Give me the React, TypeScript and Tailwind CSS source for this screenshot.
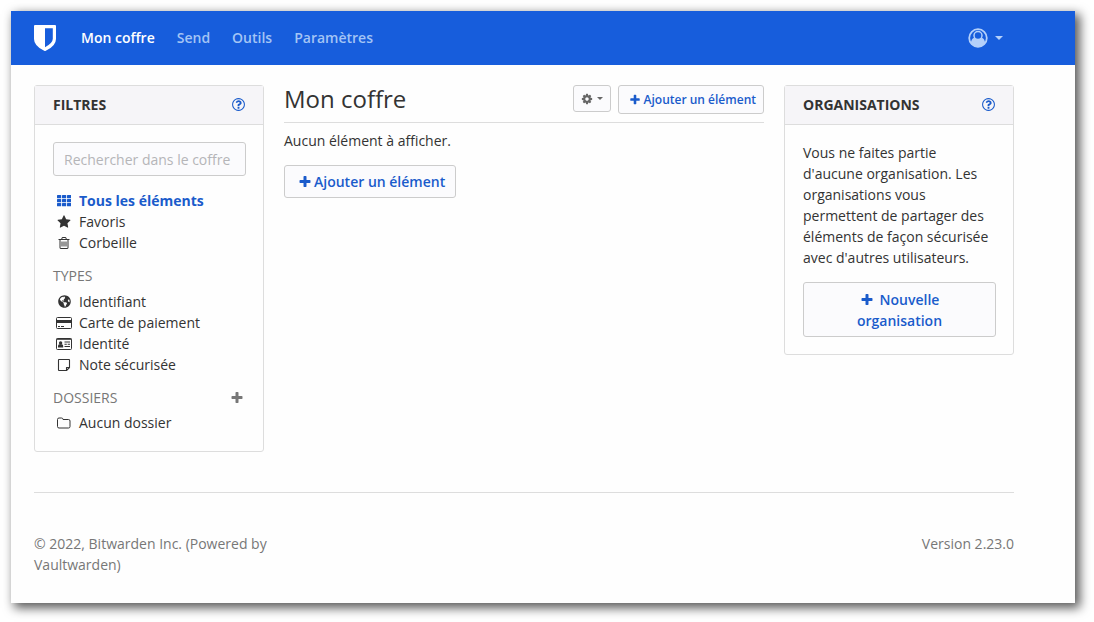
import type { ReactNode } from "react";
import { FaGlobeAmericas } from "react-icons/fa";

const PLUS =
  "M1600 736v192q0 40-28 68t-68 28h-416v416q0 40-28 68t-68 28h-192q-40 0-68-28t-28-68v-416h-416q-40 0-68-28t-28-68v-192q0-40 28-68t68-28h416v-416q0-40 28-68t68-28h192q40 0 68 28t28 68v416h416q40 0 68 28t28 68z";
const STAR =
  "M1728 647q0 22-26 48l-363 354 86 500q1 7 1 20 0 21-10.5 35.5t-30.5 14.5q-19 0-40-12l-449-236-449 236q-22 12-40 12-21 0-31.5-14.5t-10.5-35.5q0-6 2-20l86-500-364-354q-25-27-25-48 0-37 56-46l502-73 225-455q19-41 49-41t49 41l225 455 502 73q56 9 56 46z";
const TRASH =
  "M704 736v576q0 14-9 23t-23 9h-64q-14 0-23-9t-9-23v-576q0-14 9-23t23-9h64q14 0 23 9t9 23zm256 0v576q0 14-9 23t-23 9h-64q-14 0-23-9t-9-23v-576q0-14 9-23t23-9h64q14 0 23 9t9 23zm256 0v576q0 14-9 23t-23 9h-64q-14 0-23-9t-9-23v-576q0-14 9-23t23-9h64q14 0 23 9t9 23zm128 724v-948h-896v948q0 22 7 40.5t14.5 27 10.5 8.5h832q3 0 10.5-8.5t14.5-27 7-40.5zm-672-1076h448l-48-117q-7-9-17-11h-317q-10 2-17 11zm928 32v64q0 14-9 23t-23 9h-96v948q0 83-47 143.5t-113 60.5h-832q-66 0-113-58.5t-47-141.5v-952h-96q-14 0-23-9t-9-23v-64q0-14 9-23t23-9h309l70-167q15-37 54-63t79-26h320q40 0 79 26t54 63l70 167h309q14 0 23 9t9 23z";
const COG =
  "M1152 896q0-106-75-181t-181-75-181 75-75 181 75 181 181 75 181-75 75-181zm512-109v222q0 12-8 23t-20 13l-185 28q-19 54-39 91 35 50 107 138 10 12 10 25t-9 23q-27 37-99 108t-94 71q-12 0-26-9l-138-108q-44 23-91 38-16 136-29 186-7 28-36 28h-222q-14 0-24.5-8.5t-11.5-21.5l-28-184q-49-16-90-37l-141 107q-10 9-25 9-14 0-25-11-126-114-165-168-7-10-7-23 0-12 8-23 15-21 51-66.5t54-70.5q-27-50-41-99l-183-27q-13-2-21-12.5t-8-23.5v-222q0-12 8-23t19-13l186-28q14-46 39-92-40-57-107-138-10-12-10-24 0-10 9-23 26-36 98.5-107.5t94.5-71.5q13 0 26 10l138 107q44-23 91-38 16-136 29-186 7-28 36-28h222q14 0 24.5 8.5t11.5 21.5l28 184q49 16 90 37l142-107q9-9 24-9 13 0 25 10 129 119 165 170 7 8 7 22 0 12-8 23-15 21-51 66.5t-54 70.5q26 50 41 98l183 28q13 2 21 12.5t8 23.5z";
const HELP =
  "M1008 1200v160q0 14-9 23t-23 9h-160q-14 0-23-9t-9-23v-160q0-14 9-23t23-9h160q14 0 23 9t9 23zm256-496q0 50-15 90t-45.5 69-52 44-59.5 36q-32 18-46.5 28t-26 24-11.5 29v32q0 14-9 23t-23 9h-160q-14 0-23-9t-9-23v-68q0-35 10.5-64.5t24-47.5 39-35.5 41-25.5 44.5-21q53-25 75-43t22-49q0-42-43.5-71.5t-95.5-29.5q-56 0-95 27-29 20-80 83-9 12-25 12-11 0-19-6l-108-82q-10-7-12-20t5-23q122-192 349-192 129 0 238.5 89.5t109.5 214.5zm-368-448q-130 0-248.5 51t-204 136.5-136.5 204-51 248.5 51 248.5 136.5 204 204 136.5 248.5 51 248.5-51 204-136.5 136.5-204 51-248.5-51-248.5-136.5-204-204-136.5-248.5-51zm768 640q0 209-103 385.5t-279.5 279.5-385.5 103-385.5-103-279.5-279.5-103-385.5 103-385.5 279.5-279.5 385.5-103 385.5 103 279.5 279.5 103 385.5z";

function Glyph({ d, className = "size-[14px]" }: { d: string; className?: string }) {
  return (
    <svg viewBox="0 0 1792 1792" fill="currentColor" className={`shrink-0 ${className}`} aria-hidden="true">
      <path d={d} />
    </svg>
  );
}

function GridIcon() {
  return (
    <svg viewBox="0 0 14 14" fill="currentColor" className="size-[14px]" aria-hidden="true">
      {[1, 5, 9].map((y) =>
        [0, 5, 10].map((x) => <rect key={`${x}-${y}`} x={x} y={y} width="4.2" height="3.3" rx="0.5" />)
      )}
    </svg>
  );
}

function CardIcon() {
  return (
    <svg viewBox="0 0 16 14" className="h-[14px] w-4" aria-hidden="true">
      <rect x="0.5" y="1.5" width="15" height="11" rx="1" fill="none" stroke="currentColor" />
      <path d="M0.5 4h15v3h-15zM2 10h2v1H2zM5 10h3v1H5z" fill="currentColor" />
    </svg>
  );
}

function IdentityIcon() {
  return (
    <svg viewBox="0 0 16 14" className="h-[14px] w-4" aria-hidden="true">
      <rect x="0.5" y="1.5" width="15" height="11" rx="1" fill="none" stroke="currentColor" />
      <path d="M0.5 1.5h15v1.3h-15z" fill="currentColor" />
      <circle cx="4.6" cy="6" r="1.7" fill="currentColor" />
      <path
        d="M2 10.5V9q0-1.8 1.5-1.8h2.2Q7.2 7.2 7.2 9v1.500zM8.500 4.500H14v1H8.500zM8.500 6.700h2.300v1H8.500zM11.700 6.700H14v1h-2.300zM8.500 9H14v1H8.500z"
        fill="currentColor"
      />
    </svg>
  );
}

function NoteIcon() {
  return (
    <svg
      viewBox="0 0 14 14"
      className="size-[14px]"
      fill="none"
      stroke="currentColor"
      strokeWidth="1.1"
      strokeLinejoin="round"
      aria-hidden="true"
    >
      <path d="M2 1.5h10q0.500 0 0.500 0.500v7.500l-3 3H2q-0.500 0-0.500-0.500V2q0-0.500 0.500-0.500zM9.500 12.500V9.500h3" />
    </svg>
  );
}

function FolderIcon() {
  return (
    <svg viewBox="0 0 14 14" className="size-[14px]" fill="none" stroke="currentColor" aria-hidden="true">
      <path d="M0.5 3.500q0-1.500 1.500-1.500h2.500q1.500 0 1.500 1.500h5.500q1.500 0 1.500 1.500v5.500q0 1.500-1.500 1.500H2q-1.500 0-1.500-1.500z" />
    </svg>
  );
}

function ShieldLogo() {
  return (
    <svg viewBox="0 0 22 26" className="h-[26px] w-[22px]" aria-hidden="true">
      <path
        fill="white"
        fillRule="evenodd"
        d="M1 0h20q1 0 1 1v13q0 7-10.200 11.800q-0.800 0.400-1.600 0Q0 21 0 14V1Q0 0 1 0zM11 3.300v18.900q7.800-4 7.800-8.400V3.300z"
      />
    </svg>
  );
}

function UserIcon() {
  return (
    <svg viewBox="0 0 20 20" className="size-5" aria-hidden="true">
      <circle cx="10" cy="10" r="8.800" fill="none" stroke="currentColor" strokeWidth="1.800" />
      <path d="M2.800 15.500q0.400-5.200 3.700-5.700Q10 13.500 13.500 9.800q3.300 0.500 3.700 5.700Q14.500 19 10 19t-7.200-3.500z" fill="currentColor" />
      <circle cx="10" cy="7.600" r="4" fill="#175ddc" stroke="currentColor" strokeWidth="1.500" />
    </svg>
  );
}

function Caret({ className }: { className: string }) {
  return (
    <svg viewBox="0 0 8 4" fill="currentColor" className={className} aria-hidden="true">
      <path d="M0 0h8L4 4z" />
    </svg>
  );
}

const navLinks = ["Mon coffre", "Send", "Outils", "Paramètres"];

const mainFilters = [
  { label: "Tous les éléments", icon: <GridIcon />, active: true },
  { label: "Favoris", icon: <Glyph d={STAR} />, active: false },
  { label: "Corbeille", icon: <Glyph d={TRASH} />, active: false },
];

const typeFilters = [
  { label: "Identifiant", icon: <FaGlobeAmericas size={13} />, active: false },
  { label: "Carte de paiement", icon: <CardIcon />, active: false },
  { label: "Identité", icon: <IdentityIcon />, active: false },
  { label: "Note sécurisée", icon: <NoteIcon />, active: false },
];

const folderFilters = [{ label: "Aucun dossier", icon: <FolderIcon />, active: false }];

function FilterList({ items }: { items: { label: string; icon: ReactNode; active: boolean }[] }) {
  return (
    <ul>
      {items.map((item) => (
        <li key={item.label}>
          <a
            href="#"
            className={`flex items-center gap-[6px] pl-[2px] ${item.active ? "font-bold text-[#1a5bcb]" : "text-[#333]"}`}
          >
            <span className="flex w-[18px] shrink-0 justify-center">{item.icon}</span>
            {item.label}
          </a>
        </li>
      ))}
    </ul>
  );
}

function Panel({ title, children }: { title: string; children: ReactNode }) {
  return (
    <section className="rounded-[3px] border border-[#ddd]">
      <header className="flex items-center justify-between border-b border-[#ddd] bg-[#f6f5f8] pt-2 pr-[17px] pb-[9px] pl-[18px]">
        <h2 className="font-bold uppercase">{title}</h2>
        <a href="#" aria-label="Aide" className="text-[#1a5bcb]">
          <Glyph d={HELP} className="size-[15px]" />
        </a>
      </header>
      {children}
    </section>
  );
}

export default function App() {
  return (
    <div className="bg-white pt-[11px] pr-[19px] pb-[19px] pl-[11px] font-['Open_Sans','Noto_Sans',sans-serif] text-[14px] leading-[21px] text-[#333]">
      <div className="bg-[#fefefe] shadow-[4px_4px_10px_1px_rgba(0,0,0,0.65)]">
        <nav className="flex h-[54px] items-center bg-[#175ddc] pr-[72px] pl-[23px] font-semibold">
          <a href="#" aria-label="Bitwarden">
            <ShieldLogo />
          </a>
          <ul className="ml-[25px] flex gap-[22px] pb-[2px]">
            {navLinks.map((link, i) => (
              <li key={link}>
                <a href="#" className={i === 0 ? "text-white" : "text-[#a3c4f5]"}>
                  {link}
                </a>
              </li>
            ))}
          </ul>
          <button type="button" aria-label="Compte" className="ml-auto flex items-center gap-[7px] text-[#b4d0fa]">
            <UserIcon />
            <Caret className="h-1 w-2" />
          </button>
        </nav>

        <div className="pr-[61px] pl-[23px]">
          <main className="grid grid-cols-4 items-start gap-5 pt-5">
            <Panel title="Filtres">
              <div className="pt-[17px] pr-[17px] pb-[18px] pl-[18px]">
                <input
                  type="text"
                  aria-label="Rechercher dans le coffre"
                  placeholder="Rechercher dans le coffre"
                  className="mb-[14px] block h-[34px] w-full rounded-[3px] border border-[#ccc] bg-[#fbfbfd] px-[10px] placeholder:text-[#b5b5b8]"
                />
                <FilterList items={mainFilters} />
                <h3 className="mt-3 mb-[5px] text-[#777] uppercase">Types</h3>
                <FilterList items={typeFilters} />
                <div className="mt-3 mb-1 flex items-center justify-between pr-[2px] text-[#777]">
                  <h3 className="uppercase">Dossiers</h3>
                  <button type="button" aria-label="Ajouter un dossier">
                    <Glyph d={PLUS} />
                  </button>
                </div>
                <FilterList items={folderFilters} />
              </div>
            </Panel>

            <section className="col-span-2">
              <header className="flex items-start border-b border-[#ddd] pb-2">
                <h1 className="flex-1 text-[24px] leading-[27px]">Mon coffre</h1>
                <button
                  type="button"
                  aria-label="Options"
                  className="mr-[7px] flex h-[27px] items-center gap-1 rounded-[3px] border border-[#ccc] bg-[#fbfbfd] px-[7px] text-[#666]"
                >
                  <Glyph d={COG} className="size-3" />
                  <Caret className="h-[3px] w-[6px]" />
                </button>
                <button
                  type="button"
                  className="flex h-[29px] items-center gap-[3px] rounded-[3px] border border-[#ccc] bg-[#fbfbfd] pr-[7px] pl-[10px] text-[12px] font-semibold text-[#1a5bcb]"
                >
                  <Glyph d={PLUS} className="size-3" />
                  Ajouter un élément
                </button>
              </header>
              <p className="mt-[7px]">Aucun élément à afficher.</p>
              <button
                type="button"
                className="mt-[14px] flex h-[33px] items-center gap-[2px] rounded-[3px] border border-[#ccc] bg-[#fbfbfd] pr-[10px] pl-[13px] font-semibold text-[#1a5bcb]"
              >
                <Glyph d={PLUS} />
                Ajouter un élément
              </button>
            </section>

            <Panel title="Organisations">
              <div className="pt-[17px] pr-[17px] pb-[17px] pl-[18px]">
                <p className="mb-[14px]">
                  Vous ne faites partie d'aucune organisation. Les organisations vous permettent de partager des
                  éléments de façon sécurisée avec d'autres utilisateurs.
                </p>
                <button
                  type="button"
                  className="w-full rounded-[3px] border border-[#ccc] bg-[#fbfbfd] px-10 pt-[6px] pb-[5px] text-center font-semibold text-[#1a5bcb]"
                >
                  <Glyph d={PLUS} className="mr-[6px] inline size-[14px] align-[-2px]" />
                  Nouvelle organisation
                </button>
              </div>
            </Panel>
          </main>

          <footer className="mt-10 grid grid-cols-4 gap-5 border-t border-[#ddd] pt-10 pb-7 text-[#777]">
            <p className="col-span-2 max-w-[240px]">© 2022, Bitwarden Inc. (Powered by Vaultwarden)</p>
            <p className="col-span-2 text-right">Version 2.23.0</p>
          </footer>
        </div>
      </div>
    </div>
  );
}
